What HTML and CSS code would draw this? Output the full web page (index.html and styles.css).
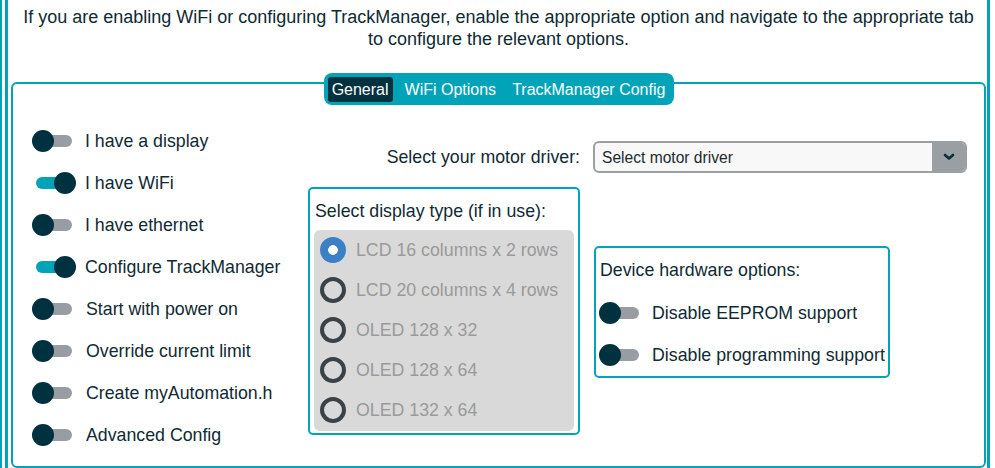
FILE: index.html
```html
<!DOCTYPE html>
<html lang="en">
<head>
<meta charset="utf-8">
<title>Configuration</title>
<link rel="stylesheet" href="styles.css">
</head>
<body>
<div class="frame">
  <div class="panel">
    <p class="intro">If you are enabling WiFi or configuring TrackManager, enable the appropriate option and navigate to the appropriate tab to configure the relevant options.</p>
    <section class="card">
      <nav class="tabs">
        <span class="tab active">General</span>
        <span class="tab">WiFi Options</span>
        <span class="tab">TrackManager Config</span>
      </nav>
      <div class="card-body">
        <ul class="toggles">
          <li class="toggle-row"><span class="switch"></span><span>I have a display</span></li>
          <li class="toggle-row"><span class="switch on"></span><span>I have WiFi</span></li>
          <li class="toggle-row"><span class="switch"></span><span>I have ethernet</span></li>
          <li class="toggle-row"><span class="switch on"></span><span>Configure TrackManager</span></li>
          <li class="toggle-row shift"><span class="switch"></span><span>Start with power on</span></li>
          <li class="toggle-row shift"><span class="switch"></span><span>Override current limit</span></li>
          <li class="toggle-row shift"><span class="switch"></span><span>Create myAutomation.h</span></li>
          <li class="toggle-row shift"><span class="switch"></span><span>Advanced Config</span></li>
        </ul>
        <div class="config">
          <label class="motor-label">Select your motor driver:</label>
          <div class="select">
            <span class="select-text">Select motor driver</span>
            <span class="select-btn">
              <svg width="12" height="8" viewBox="0 0 12 8"><polyline points="2,2 6,5.5 10,2" fill="none" stroke="#0b2f3a" stroke-width="2.6" stroke-linecap="round" stroke-linejoin="round"/></svg>
            </span>
          </div>
          <div class="box display-box">
            <div class="box-title">Select display type (if in use):</div>
            <div class="radios">
              <div class="radio-row"><span class="radio checked"></span><span>LCD 16 columns x 2 rows</span></div>
              <div class="radio-row"><span class="radio"></span><span>LCD 20 columns x 4 rows</span></div>
              <div class="radio-row"><span class="radio"></span><span>OLED 128 x 32</span></div>
              <div class="radio-row"><span class="radio"></span><span>OLED 128 x 64</span></div>
              <div class="radio-row"><span class="radio"></span><span>OLED 132 x 64</span></div>
            </div>
          </div>
          <div class="box hw-box">
            <div class="box-title hw-title">Device hardware options:</div>
            <ul class="hw-toggles">
              <li class="toggle-row"><span class="switch"></span><span>Disable EEPROM support</span></li>
              <li class="toggle-row"><span class="switch"></span><span>Disable programming support</span></li>
            </ul>
          </div>
        </div>
      </div>
    </section>
  </div>
</div>
</body>
</html>
```

FILE: styles.css
```css
* { box-sizing: border-box; }

html, body {
  margin: 0;
  padding: 0;
  height: 468px;
  overflow: hidden;
  background: #ffffff;
}

body {
  font-family: "Liberation Sans", Arial, sans-serif;
  font-size: 17.75px;
  color: #0f2a33;
}

.frame {
  height: 468px;
  border-left: 2px solid #00a3b8;
  padding-left: 3px;
}

.panel {
  width: 985px;
  height: 468px;
  border-left: 3px solid #00a3b8;
  border-right: 3px solid #00a3b8;
  padding: 0 1px 0 3px;
}

.intro {
  margin: 0;
  padding: 6px 12px 0;
  font-size: 18px;
  line-height: 22px;
  text-align: center;
}

.card {
  margin-top: 32px;
  border: 2px solid #00a3b8;
  border-radius: 6px;
  display: flex;
  flex-direction: column;
}

.tabs {
  align-self: center;
  margin-top: -11px;
  margin-left: 1px;
  display: flex;
  gap: 8px;
  padding: 4px 5px 3px 4px;
  background: #00a3b8;
  border-radius: 8px;
  font-size: 16px;
}

.tab {
  color: #ffffff;
  line-height: 25px;
  padding: 0 4px;
  border-radius: 3px;
  white-space: nowrap;
}

.tab.active {
  background: #00313e;
}

.card-body {
  display: flex;
  align-items: flex-start;
  padding-bottom: 10px;
}

.toggles,
.hw-toggles {
  list-style: none;
  margin: 0;
  padding: 0;
}

.toggles {
  width: 295px;
  padding: 15px 0 0 19px;
  flex: none;
}

.toggle-row {
  display: flex;
  align-items: center;
  gap: 9px;
  height: 42px;
  white-space: nowrap;
}

.toggle-row.shift span:last-child {
  margin-left: 1px;
}

.switch {
  position: relative;
  width: 44px;
  height: 22px;
  flex: none;
}

.switch::before {
  content: "";
  position: absolute;
  left: 4px;
  right: 4px;
  top: 5px;
  height: 12px;
  border-radius: 6px;
  background: #989da3;
}

.switch::after {
  content: "";
  position: absolute;
  left: 0;
  top: 0;
  width: 22px;
  height: 22px;
  border-radius: 50%;
  background: #00313e;
}

.switch.on::before {
  background: #00a3b8;
}

.switch.on::after {
  left: 22px;
}

.config {
  padding-top: 36px;
  display: grid;
  grid-template-columns: 272px 374px;
  align-content: start;
  column-gap: 13px;
  row-gap: 14px;
  align-items: start;
}

.motor-label {
  justify-self: end;
  align-self: center;
  white-space: nowrap;
}

.select {
  height: 32px;
  display: flex;
  align-items: center;
  border: 2px solid #9a9fa4;
  border-radius: 6px;
  background: #f8f8f8;
  overflow: hidden;
}

.select-text {
  padding: 2px 0 0 7px;
  font-size: 15.6px;
  color: #1b2a30;
}

.select-btn {
  margin-left: auto;
  width: 33px;
  height: 100%;
  background: #9a9fa4;
  display: flex;
  align-items: center;
  justify-content: center;
}

.box {
  border: 2px solid #00a3b8;
  border-radius: 5px;
}

.box-title {
  line-height: 22px;
  padding: 11px 0 0 1px;
  margin-bottom: 8px;
  white-space: nowrap;
}

.display-box {
  padding: 0 4px 2px;
}

.radios {
  background: #d9d9d9;
  border-radius: 6px;
  padding-bottom: 1px;
}

.radio-row {
  height: 40px;
  display: flex;
  align-items: center;
  gap: 10px;
  padding-left: 6px;
  color: #9a9a9a;
  white-space: nowrap;
}

.radio {
  width: 26px;
  height: 26px;
  border-radius: 50%;
  border: 4px solid #3a4248;
  flex: none;
}

.radio.checked {
  border: none;
  background: radial-gradient(circle, #ffffff 4.5px, #3b7fc4 5.2px);
}

.hw-box {
  margin-top: 59px;
  margin-left: 1px;
  width: 296px;
  padding: 0 0 0 4px;
}

.hw-title {
  padding-left: 0;
  margin-bottom: 11px;
}

.hw-toggles {
  margin-left: -1px;
}
```
